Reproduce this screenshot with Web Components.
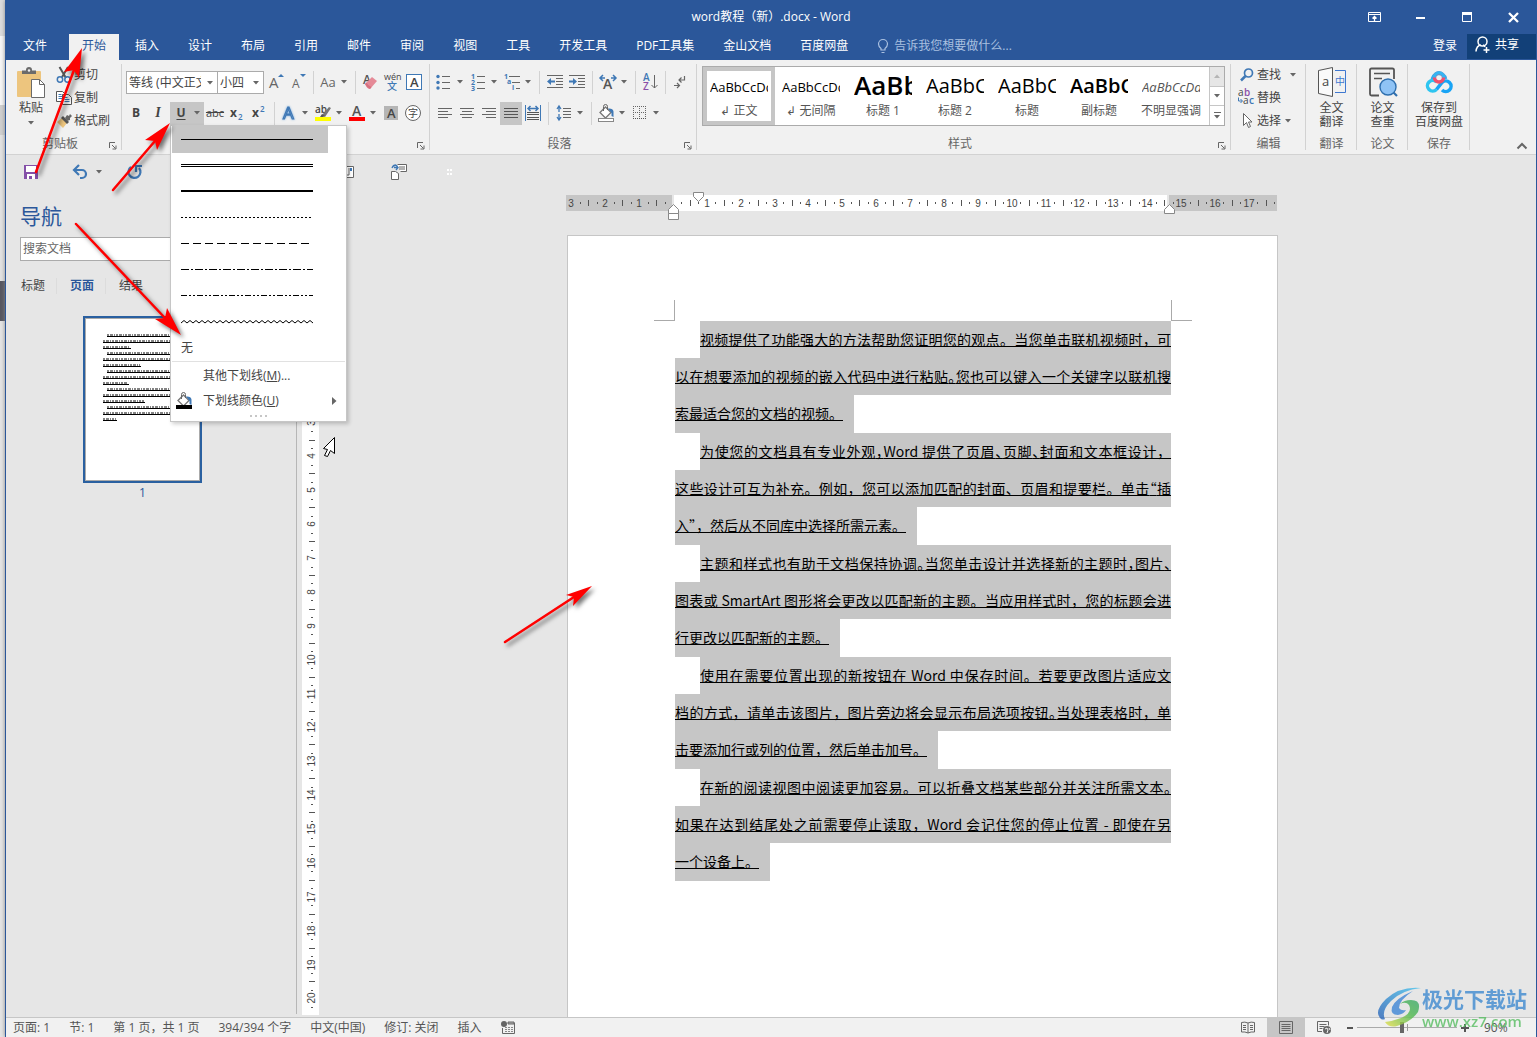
<!DOCTYPE html>
<html lang="zh-CN">
<head>
<meta charset="utf-8">
<title>word教程（新）.docx - Word</title>
<style>
html, body { margin: 0; height: 100%; }
body {
  overflow: hidden;
  font: 12px/16px "Open Sans", "Noto Sans CJK SC", sans-serif;
  color: #444;
  --blue: #2b579a; --face: #f1f1f1; --sel: #c6c6c6; --back: #e6e6e6; --accent: #3f78b5;
}
</style>
</head>
<body>
<word-window>
  <title-bar slot="title">word教程（新）.docx - Word</title-bar>
  <tab-strip slot="tabs"></tab-strip>
  <ribbon-bar slot="ribbon">
    <clipboard-group></clipboard-group>
    <font-group></font-group>
    <paragraph-group></paragraph-group>
    <style-group></style-group>
    <edit-group></edit-group>
    <plugin-group icon="translate" label="翻译" w="50">全文<br>翻译</plugin-group>
    <plugin-group icon="paper" label="论文" w="50">论文<br>查重</plugin-group>
    <plugin-group icon="cloud" label="保存" w="61">保存到<br>百度网盘</plugin-group>
  </ribbon-bar>
  <quick-bar slot="quick"></quick-bar>
  <nav-pane slot="nav"></nav-pane>
  <document-view slot="doc"></document-view>
  <status-bar slot="status"></status-bar>
</word-window>
<site-mark></site-mark>
<pointer-layer></pointer-layer>

<script>
const base = `
  :host, *, *::before, *::after { box-sizing: border-box; }
  button { font: inherit; color: inherit; background: none; border: 0; padding: 0; margin: 0; display: flex; align-items: center; justify-content: center; white-space: nowrap; }
  svg { display: block; }
`;
function define(name, css, html) {
  const tpl = document.createElement('template');
  customElements.define(name, class extends HTMLElement {
    connectedCallback() {
      if (this.shadowRoot) return;
      tpl.innerHTML = `<style>${base}${css}</style>` + (typeof html === 'function' ? html(this) : html);
      this.attachShadow({ mode: 'open' }).appendChild(tpl.content.cloneNode(true));
    }
  });
}

/* ---------- icons: [width, height, markup] ---------- */
const G = 'stroke="#666" fill="none"', B = 'stroke="#3f78b5" fill="none"';
const lines = (ys, x1, x2, c = '#666') => ys.map(y => `<path d="M${x1} ${y}.5H${x2}" stroke="${c}"/>`).join('');
const T = (x, y, size, text, color = '#555', extra = '') =>
  `<text x="${x}" y="${y}" font-size="${size}" fill="${color}" ${extra}>${text}</text>`;
const bucket = `<path d="M3 8.500 8.500 3 14 8.500 8.500 14Z" fill="#fff" stroke="#777" stroke-width="1.300"/><path d="M6.500 7V2.500q0-2 2-2t2 2V6" ${G}/><path d="M11 4.500q5-.5 5.500 3V13l-2-1V9z" fill="#3f78b5"/>`;
const icons = {
  paste: [30, 32, `<rect x="1" y="4" width="24" height="26" rx="1" fill="#edc57e"/><path d="M6 7V3.500h4V3q0-3 3-3t3 3v.5h4V7z" fill="#6b6b6b"/><circle cx="13" cy="3.500" r="1.200" fill="#f1f1f1"/><path d="M15.500 12.500h8l5 5v13h-13z" fill="#fff" stroke="#6b6b6b"/><path d="M23.500 12.500v5h5" ${G}/>`],
  cut: [16, 16, `<path d="M3.500 0 10 11M12 0 5.500 11" stroke="#555" stroke-width="2"/><circle cx="4" cy="12.500" r="2.700" stroke="#3f78b5" stroke-width="1.500" fill="none"/><circle cx="11.500" cy="12.500" r="2.700" stroke="#3f78b5" stroke-width="1.500" fill="none"/>`],
  copy: [16, 16, `<path d="M.5 1.500h6l2 2v8h-8z" fill="#fff" stroke="#555"/><path d="M2.500 4.500h3M2.500 6.500h4M2.500 8.500h4" ${B}/><path d="M6.500 4.500h6l3 3v7h-9z" fill="#fff" stroke="#555"/><path d="M8.500 7.500h3M8.500 9.500h5M8.500 11.500h5" ${B}/>`],
  brush: [16, 16, `<path d="M1 9 6 5l5 5-4 5z" fill="#edc57e"/><path d="M5 5l2-2 6 6-2 2z" fill="#555"/><path d="M9 5l2-3 2 1 1-2 2 2-2 2 0 2-3 1z" fill="#666"/>`],
  launch: [8, 8, `<path d="M.5 6V.5H6" ${G}/><path d="M3 3l3.500 3.500M7 3.500V7H3.500" stroke="#666" fill="none"/>`],
  caret: [6, 4, `<path d="M0 0H6L3 3.500Z" fill="#666"/>`],
  caretUp: [6, 4, `<path d="M0 4H6L3 .5Z" fill="#b5b5b5"/>`],
  grow: [18, 18, T(2, 15, 15, 'A', '#666') + `<path d="M11 4h6L14 1Z" fill="#3f78b5"/>`],
  shrink: [18, 18, T(3, 15, 12, 'A', '#666') + `<path d="M11 1h6l-3 3Z" fill="#3f78b5"/>`],
  erase: [18, 18, T(2, 11, 12, 'A', '#555', 'font-weight="600"') + `<path d="M4 11 11 4l5 4-7 8q-3 0-5-5z" fill="#e58a97"/><path d="M4 11q2 4 5 5l1.500-2Q7 13 5.500 9.500z" fill="#d8707f"/>`],
  pinyin: [18, 20, T(1, 8, 9, 'wén', '#444') + T(4, 18, 10, '文', '#3f78b5', 'font-weight="500"')],
  boxA: [18, 18, `<rect x="1.500" y="1.500" width="15" height="15" fill="#fff" stroke="#3f78b5"/>` + T(5, 14, 13, 'A', '#444', 'font-weight="600"')],
  sub: [16, 16, T(1, 12, 12, 'x', '#444', 'font-weight="700"') + T(9, 15, 8, '2', '#3f78b5', 'font-weight="600"')],
  sup: [16, 16, T(1, 12, 12, 'x', '#444', 'font-weight="700"') + T(9, 7, 8, '2', '#3f78b5', 'font-weight="600"')],
  effect: [16, 18, `<text x="2" y="15" font-size="17" fill="#fff" stroke="#3f78b5" stroke-width="1.200" style="filter:drop-shadow(0 0 1px #7fb0e0)">A</text>`],
  marker: [18, 18, T(1, 9, 10, 'ab', '#444', 'font-weight="600"') + `<path d="M8 11l7-8 2 1-6 9z" fill="#777"/><path d="M6 13l2-3 3 2-2 1z" fill="#555"/><path d="M1 13h16v4H1z" fill="#ff0"/>`],
  color: [18, 18, T(4, 12, 14, 'A', '#555', 'font-weight="600"') + `<path d="M1 13h16v4H1z" fill="#f00"/>`],
  shade: [16, 16, `<path d="M1 1h14v14H1z" fill="#b5b5b5"/>` + T(4, 13, 13, 'A', '#444', 'font-weight="600"')],
  circle: [18, 18, `<circle cx="9" cy="9" r="7.500" fill="#fff" stroke="#666"/>` + T(4, 13, 10, '字', '#444')],
  bullets: [16, 16, lines([2, 8, 14], 6, 14) + `<circle cx="2" cy="2.500" r="1.700" fill="#3f78b5"/><circle cx="2" cy="8.500" r="1.700" fill="#3f78b5"/><circle cx="2" cy="14" r="1.700" fill="#3f78b5"/>`],
  numbers: [16, 18, lines([3, 9, 15], 7, 15) + T(1, 6, 7, '1', '#3f78b5', 'font-weight="700"') + T(1, 12, 7, '2', '#3f78b5', 'font-weight="700"') + T(1, 18, 7, '3', '#3f78b5', 'font-weight="700"')],
  multi: [18, 18, lines([3], 6, 17) + lines([9], 9, 17) + lines([15], 13, 17) + T(1, 6, 7, '1', '#3f78b5', 'font-weight="700"') + T(4, 11, 7, 'a', '#3f78b5', 'font-weight="700"') + T(9, 17, 7, 'i', '#3f78b5', 'font-weight="700"')],
  outdent: [16, 16, lines([1, 13], 0, 16) + lines([4, 7, 10], 9, 16) + `<path d="M0 7.500 4 4v2.500h4v2H4V11z" fill="#3f78b5"/>`],
  indent: [16, 16, lines([1, 13], 0, 16) + lines([4, 7, 10], 9, 16) + `<path d="M8 7.500 4 4v2.500H0v2h4V11z" fill="#3f78b5"/>`],
  asian: [18, 16, T(4, 15, 14, 'A', '#555', 'font-weight="600"') + `<path d="M1 4h5M4 1 1 4l3 3M17 4h-5M14 1l3 3-3 3" ${B} stroke-width="1.500"/>`],
  sort: [16, 18, T(1, 8, 10, 'A', '#3f78b5', 'font-weight="600"') + T(1, 17, 10, 'Z', '#8a4fa8', 'font-weight="600"') + `<path d="M12.500 2v13M9.500 12l3 3 3-3" ${G}/>`],
  pilcrow: [14, 14, `<path d="M11.500 1v4H6M8.500 2.500 6 5l2.500 2.500" ${G} stroke-width="1.200"/><path d="M1 10.500h5M4 8l2.500 2.500L4 13" ${G} stroke-width="1.200"/>`],
  left: [14, 12, lines([1, 7], 0, 14) + lines([4, 10], 0, 10)],
  center: [14, 12, lines([1, 7], 0, 14) + lines([4, 10], 2, 12)],
  right: [14, 12, lines([1, 7], 0, 14) + lines([4, 10], 4, 14)],
  justify: [14, 12, lines([1, 4, 7, 10], 0, 14, '#555')],
  spread: [16, 16, lines([7, 9, 12, 14], 2, 14, '#555') + `<path d="M.5 0v16M15.500 0v16" ${B}/><path d="M3 3.500h10M5.500 1 3 3.500 5.500 6M10.500 1 13 3.500 10.500 6" ${B} stroke-width="1.500"/>`],
  spacing: [16, 16, lines([3, 6, 9, 12], 7, 15) + `<path d="M3 2v5M1 4l2-3 2 3M3 9v5M1 12l2 3 2-3" ${B} stroke-width="1.300"/>`],
  fill: [18, 18, bucket + `<rect x="1.500" y="14.500" width="15" height="3" fill="#fff" stroke="#888"/>`],
  border: [14, 14, `<path d="M0 .5H14M0 6.500H14M.5 0V14M6.500 0V14M12.500 0V14" stroke="#666" stroke-dasharray="1 1"/><path d="M0 12.500H13" stroke="#555" stroke-dasharray="1 1"/>`],
  find: [14, 14, `<circle cx="8.500" cy="5" r="4" stroke="#3f78b5" stroke-width="1.700" fill="none"/><path d="M5.500 8 1 12.500" stroke="#3f78b5" stroke-width="2.500"/>`],
  replace: [18, 18, T(0, 7, 10, 'a', '#444') + T(6, 7, 10, 'b', '#8a4fa8', 'font-weight="600"') + T(5, 15, 10, 'a', '#444') + T(11, 15, 10, 'c', '#3f78b5', 'font-weight="600"') + `<path d="M.5 8.500V12H4M2.500 10l2 2-2 2" ${B}/>`],
  select: [12, 16, `<path d="M2.500.5v12l3-3 2 5 2-1-2-4.500h3.500z" fill="#fff" stroke="#666"/>`],
  translate: [30, 30, `<path d="M1.500 3.500 15.500.5v29l-14-3z" fill="#fafafa" stroke="#555"/><path d="M18 3.500h10.500v22H18" stroke="#3f78d0" fill="none"/>` + T(5, 19, 13, 'a', '#444') + T(18, 18, 10, '中', '#3f78d0')],
  paper: [30, 30, `<path d="M26 12V3q0-1.500-1.500-1.500h-21Q2 1.500 2 3v24q0 1.500 1.500 1.500H11" stroke="#555" stroke-width="1.800" fill="none"/><path d="M6 6.500h16M6 11.500h8" stroke="#555" stroke-width="1.500"/><path d="M25 25l4 4" stroke="#2f6fae" stroke-width="2.200"/><circle cx="20" cy="20" r="8" fill="#8fc3f5" stroke="#2f6fae" stroke-width="1.400"/>`],
  cloud: [28, 30, `<g fill="none" stroke-width="3.500"><path d="M7.500 14a6.500 6.500 0 0 1 13 -2" stroke="#2eaaf0"/><path d="M11.500 22.500a5.300 5.300 0 1 1 0-7.500" stroke="#2ec5f0"/><path d="M11.500 22.500 17 15.500a5.300 5.300 0 1 1 0 7.500" stroke="#19a4f5"/><circle cx="14" cy="10.500" r="4.500" stroke="#f0506e"/><path d="M9.300 10.500a4.700 4.700 0 0 1 9.400 0" stroke="#35b5f2"/></g>`],
  up: [12, 8, `<path d="M1.500 6.500 6 2l4.500 4.500" stroke="#666" stroke-width="2" fill="none"/>`],
  save: [14, 14, `<path d="M0 0h14v14H0z" fill="#8450a8"/><path d="M2 1h10v6H2z" fill="#fff"/><path d="M3 9h8v5H3z" fill="#fff"/><path d="M5 11h3v3H5z" fill="#8450a8"/>`],
  undo: [16, 14, `<path d="M2 5h7a4 4 0 0 1 0 8H7" stroke="#3f78b5" stroke-width="2.200" fill="none"/><path d="M6 0 1 5l5 5" stroke="#3f78b5" stroke-width="2.200" fill="none"/>`],
  redo: [16, 16, `<path d="M4 3A6 6 0 1 0 12 4" stroke="#3f78b5" stroke-width="2.200" fill="none"/><path d="M9 8V2h6" stroke="#3f78b5" stroke-width="2.200" fill="none"/>`],
  touch: [16, 16, `<path d="M6.500 2.500h8v11h-8z" fill="#fff" stroke="#666"/><path d="M10 4v7H7" ${G}/><path d="M11 4h2v3h-2z" fill="#3f78b5"/>`],
  toPage: [18, 18, `<path d="M7.500 1.500h9v7h-6" fill="#fff" stroke="#666"/><path d="M9 4h6M9 6h6" ${G}/><path d="M1.500 8.500h4l3 2v6h-7z" fill="#fff" stroke="#666"/><path d="M2 5q1-3 4-3M4 4.500h4M6 2l2 2.500L6 7" ${B} stroke-width="1.300"/>`],
  ribbon: [14, 11, `<path d="M.5.5h12v9H.5zM.5 2.500h12" stroke="#fff" fill="none"/><path d="M6.500 9V5M4.500 6.500l2-2 2 2" stroke="#fff" fill="none" stroke-width="1.300"/>`],
  min: [10, 3, `<path d="M0 1h9v2H0z" fill="#fff"/>`],
  max: [10, 10, `<path d="M.5.5h9v9h-9z" stroke="#fff" fill="none"/><path d="M0 0h10v3H0z" fill="#fff"/>`],
  close: [11, 11, `<path d="M1 1l9 9M10 1l-9 9" stroke="#fff" stroke-width="2.300"/>`],
  bulb: [12, 15, `<path d="M4 11V9.500Q1.500 7.500 1.500 5a4.500 4.500 0 0 1 9 0Q10.500 7.500 8 9.500V11zM4.500 13.500h3" stroke="#a9c0e0" fill="none" stroke-width="1.200"/>`],
  person: [16, 17, `<circle cx="7.500" cy="5.500" r="4.500" stroke="#fff" stroke-width="1.500" fill="none"/><path d="M1 15.500q.5-6 5-6.500M8 9q1.500.5 2 2M11.500 11v6M8.500 14h6" stroke="#fff" stroke-width="1.500" fill="none"/>`],
  macro: [14, 13, `<path d="M7 2h6.500v10.500h-12V7M7 1h6v2H7z" stroke="#666" fill="none"/><circle cx="3" cy="3" r="3" fill="#666"/><path d="M4 6.500h2M7 6.500h2M10 6.500h2M4 8.500h2M7 8.500h2M10 8.500h2M4 10.500h2M7 10.500h2M10 10.500h2" stroke="#888"/>`],
  read: [14, 13, `<path d="M.5 1.500Q4 .5 7 2q3-1.500 6.500-.5v9.500q-3.500-.5-6.500 1-3-1.500-6.500-1zM7 2v10M2 4.500h3M2 6.500h3M2 8.500h3M9 4.500h3M9 6.500h3M9 8.500h3" ${G}/>`],
  print: [14, 13, `<path d="M.5.5h13v12H.5zM2.500 3.500h9M2.500 5.500h9M2.500 7.500h9M2.500 9.500h9" ${G}/>`],
  web: [15, 14, `<path d="M5 10.500H.5V.5h11v4M2.500 3.500h7M2.500 5.500h5M2.500 7.500h3" ${G}/><circle cx="10" cy="9" r="4" fill="#666"/><path d="M8 8l2-1 1 2-1 3M12 7l1 2" stroke="#f1f1f1" fill="none"/>`],
  swatch: [18, 18, bucket + `<path d="M1 13h16v4H1z" fill="#000"/>`],
  next: [5, 8, `<path d="M0 0v8l4.500-4z" fill="#666"/>`]
};
define('w-icon', ':host{display:block;flex:none;line-height:1} svg{overflow:visible}', el => {
  const [w, h, m] = icons[el.getAttribute('n')];
  return `<svg width="${w}" height="${h}" viewBox="0 0 ${w} ${h}" aria-hidden="true">${m}</svg>`;
});
const ic = n => `<w-icon n="${n}"></w-icon>`;

/* ---------- window frame ---------- */
define('word-window', `
  :host { display: flex; height: 100vh; background: linear-gradient(#dcdcdc 0 36px, #f6f6f6 36px 105px, #cfcfcf 105px 135px, #e2e2e2 135px 281px, #565660 281px 321px, #e4e4e4 321px); }
  .win { flex: 1; min-width: 0; margin-left: 5px; border: solid var(--blue); border-width: 0 1px; display: flex; flex-direction: column; background: var(--back); box-shadow: 0 0 4px #888; }
  .body { flex: 1; min-height: 0; display: flex; }
  slot[name=doc]::slotted(*) { flex: 1; min-width: 0; }
`, `<div class="win"><slot name="title"></slot><slot name="tabs"></slot><slot name="ribbon"></slot><slot name="quick"></slot>
  <div class="body"><slot name="nav"></slot><slot name="doc"></slot></div><slot name="status"></slot></div>`);

define('title-bar', `
  :host { display: flex; height: 34px; background: var(--blue); color: #fff; align-items: center; }
  .side { flex: 1; display: flex; justify-content: flex-end; }
  button { width: 46px; height: 32px; }
`, `<div class="side"></div><slot></slot><div class="side">
  <button aria-label="功能区显示选项">${ic('ribbon')}</button><button aria-label="最小化">${ic('min')}</button><button aria-label="最大化">${ic('max')}</button><button aria-label="关闭">${ic('close')}</button></div>`);

define('tab-strip', `
  :host { display: flex; height: 26px; background: var(--blue); color: #fff; padding-left: 4px; gap: 3px; }
  button { padding: 0 13px 2px; height: 26px; }
  .file { margin-right: 6px; }
  .on { background: var(--face); color: var(--blue); }
  .tell { color: #a9c0e0; gap: 5px; }
  .push { margin-left: auto; padding: 0 8px 2px; }
  .share { background: #124078; padding: 0 17px 4px 8px; height: 25px; gap: 4px; margin-left: -1px; }
`, `<button class="file">文件</button>` +
  ['开始', '插入', '设计', '布局', '引用', '邮件', '审阅', '视图', '工具', '开发工具', 'PDF工具集', '金山文档', '百度网盘']
    .map((t, i) => `<button class="${i ? '' : 'on'}">${t}</button>`).join('') +
  `<button class="tell">${ic('bulb')}告诉我您想要做什么...</button><button class="push">登录</button><button class="share">${ic('person')}共享</button>`);

/* ---------- ribbon ---------- */
define('ribbon-bar', `
  :host { display: flex; height: 95px; background: var(--face); border-bottom: 1px solid #d2d2d2; position: relative; z-index: 2; }
  ::slotted(style-group) { flex: 1; min-width: 0; }
  .end { width: 66px; display: flex; align-items: flex-end; justify-content: flex-end; padding: 0 8px 4px 0; }
`, `<slot></slot><div class="end"><button aria-label="折叠功能区">${ic('up')}</button></div>`);

define('ribbon-group', `
  :host { display: flex; flex-direction: column; height: 94px; width: var(--gw, auto); position: relative; }
  :host::after { content: ""; position: absolute; right: 0; top: 4px; bottom: 4px; width: 1px; background: #d2d2d2; }
  .main { flex: 1; min-height: 0; }
  footer { display: flex; height: 16px; margin-bottom: 2px; padding: 0 5px; color: #666; }
  .name { flex: 1; text-align: center; }
  .l { height: 14px; width: 8px; align-items: flex-end; }
`, el => `<div class="main"><slot></slot></div><footer><span class="name">${el.getAttribute('label')}</span>${el.hasAttribute('launch') ? `<button class="l" aria-label="${el.getAttribute('label')}设置">${ic('launch')}</button>` : ''}</footer>`);

const tools = `
  :host { display: block; flex: none; }
  .rows { display: flex; flex-direction: column; gap: 8px; padding-top: 11px; }
  .row { display: flex; height: 23px; }
  .t { width: 22px; flex: none; padding-bottom: 1px; }
  .d { width: 34px; flex: none; justify-content: flex-start; padding-bottom: 1px; }
  .d > :first-child { width: 22px; display: flex; justify-content: center; }
  .d > :last-child { margin-left: 2px; }
  .sep { width: 8px; flex: none; display: flex; justify-content: center; }
  .sep::before { content: ""; width: 1px; background: #d2d2d2; }
  .wide { width: 9px; }
  .on { background: var(--sel); }
`;
const t = (n, label, cls = '') => `<button class="t ${cls}" aria-label="${label}">${ic(n)}</button>`;
const d = (n, label) => `<button class="d" aria-label="${label}"><span>${ic(n)}</span>${ic('caret')}</button>`;
const sep = '<span class="sep"></span>', sepW = '<span class="sep wide"></span>';

define('clipboard-group', `
  :host { display: block; --gw: 116px; }
  .c { display: flex; padding: 3px 0 0 12px; }
  .paste { flex-direction: column; width: 26px; justify-content: flex-start; align-items: center; padding-top: 4px; }
  .paste span { line-height: 16px; margin: 1px 0 5px; }
  .small { display: flex; flex-direction: column; margin: 0 0 0 12px; }
  .small button { height: 23px; justify-content: flex-start; gap: 2px; }
`, `<ribbon-group label="剪贴板" launch><div class="c">
  <button class="paste">${ic('paste')}<span>粘贴</span>${ic('caret')}</button>
  <div class="small"><button>${ic('cut')}剪切</button><button>${ic('copy')}复制</button><button>${ic('brush')}格式刷</button></div></div></ribbon-group>`);

define('font-group', tools + `
  :host { --gw: 308px; }
  .row { padding-left: 3px; }
  .row.top { padding-left: 4px; }
  .combo { display: flex; background: #fff; border: 1px solid #ababab; align-items: center; margin-right: 1px; position: relative; }
  .combo:first-child { margin: 0; width: 92px; border-right-width: 1px; }
  .combo:nth-child(2) { width: 46px; border-left: 0; }
  select { appearance: none; border: 0; background: none; font: inherit; color: inherit; flex: 1; min-width: 0; height: 21px; padding: 0 0 0 2px; margin-right: 16px; overflow: hidden; }
  .combo w-icon { position: absolute; right: 4px; pointer-events: none; }
  .b { font-weight: 700; }
  .i { font: italic 600 14px "Liberation Serif", serif; }
  .u { font-weight: 700; text-decoration: underline; text-underline-offset: 2px; }
  .s { text-decoration: line-through; font-size: 11px; }
  .case { font-size: 13px; color: #666; }
  .anchor { position: relative; margin-left: 1px; }
  .anchor .d { height: 23px; }
  underline-menu { position: absolute; left: 0; top: 23px; z-index: 3; }
`, `<ribbon-group label="" launch><div class="rows">
  <div class="row top"><div class="combo"><select aria-label="字体"><option>等线 (中文正文)</option></select>${ic('caret')}</div>
   <div class="combo"><select aria-label="字号"><option>小四</option></select>${ic('caret')}</div>
   ${t('grow', '增大字号')}${t('shrink', '减小字号')}${sep}<button class="d" aria-label="更改大小写"><span class="case">Aa</span>${ic('caret')}</button>${sep}
   ${t('erase', '清除格式')}${t('pinyin', '拼音指南')}${t('boxA', '字符边框')}</div>
  <div class="row"><button class="t b">B</button><button class="t i">I</button>
   <div class="anchor"><button class="d on" aria-label="下划线"><span class="u">U</span>${ic('caret')}</button><underline-menu></underline-menu></div>
   <button class="t s">abc</button>${t('sub', '下标')}${t('sup', '上标')}${sep}${d('effect', '文本效果')}${d('marker', '突出显示')}${d('color', '字体颜色')}${t('shade', '字符底纹')}${t('circle', '带圈字符')}</div>
  </div></ribbon-group>`);

const rule = m => `<svg width="132" height="6" viewBox="0 0 132 6"><g stroke="#000" fill="none">${m}</g></svg>`;
const wave = 'M0 4' + Array.from({ length: 22 }, () => 'l3-2.500 3 2.500').join('');
define('underline-menu', `
  :host { display: block; width: 177px; background: #fff; border: 1px solid #c6c6c6; box-shadow: 2px 2px 4px #0003; }
  ul { list-style: none; margin: 0; padding: 0 1px; }
  .line { width: 156px; height: 26px; justify-content: flex-start; padding-left: 9px; }
  .line.on { background: var(--sel); height: 27px; }
  .none { height: 26px; width: 100%; justify-content: flex-start; padding-left: 9px; }
  hr { border: 0; border-top: 1px solid #e1e1e1; margin: 0 1px 1px; }
  .cmd { width: 100%; height: 25px; justify-content: flex-start; }
  .cmd .ico { width: 32px; padding-left: 4px; }
  .cmd .more { margin-left: auto; padding-right: 9px; }
  .grip { height: 8px; padding-top: 2px; display: flex; gap: 3px; justify-content: center; }
  .grip i { width: 2px; height: 2px; background: #c6c6c6; }
`, () => `<ul>` + [
    '<path d="M0 2.500H132"/>', '<path d="M0 1.500H132M0 3.500H132"/>', '<path d="M0 2H132" stroke-width="2"/>',
    '<path d="M0 2.500H130" stroke-dasharray="2 2"/>', '<path d="M0 2.500H128" stroke-dasharray="8 4"/>',
    '<path d="M0 2.500H132" stroke-dasharray="8 2 2 2"/>', '<path d="M0 2.500H132" stroke-dasharray="6 2 2 2 2 2"/>', `<path d="${wave}"/>`
  ].map((m, i) => `<li><button class="line ${i ? '' : 'on'}" aria-label="线型 ${i + 1}">${rule(m)}</button></li>`).join('') +
  `<li><button class="none">无</button></li></ul><hr>
  <button class="cmd"><span class="ico"></span>其他下划线(<u>M</u>)...</button>
  <button class="cmd"><span class="ico">${ic('swatch')}</span>下划线颜色(<u>U</u>)<span class="more">${ic('next')}</span></button>
  <div class="grip"><i></i><i></i><i></i><i></i></div>`);

define('paragraph-group', tools + `
  :host { --gw: 267px; }
  .row { padding-left: 3px; } .row + .row { padding-left: 4px; }
`, `<ribbon-group label="段落" launch><div class="rows">
  <div class="row">${d('bullets', '项目符号')}${d('numbers', '编号')}${d('multi', '多级列表')}${sepW}${t('outdent', '减少缩进量')}${t('indent', '增加缩进量')}${sepW}${d('asian', '中文版式')}${sep}${t('sort', '排序')}${sep}${t('pilcrow', '显示编辑标记')}</div>
  <div class="row">${t('left', '左对齐')}${t('center', '居中')}${t('right', '右对齐')}${t('justify', '两端对齐', 'on')}${t('spread', '分散对齐')}${sepW}${d('spacing', '行距')}${sep}${d('fill', '底纹')}${d('border', '边框')}</div>
  </div></ribbon-group>`);

define('style-card', `
  :host { display: block; width: 72px; flex: none; }
  button { width: 72px; height: 58px; flex-direction: column; border: 4px solid transparent; justify-content: flex-start; padding: 0 3px; }
  :host([on]) button { border-color: var(--sel); }
  .demo { width: 58px; height: 30px; overflow: hidden; font-size: 13px; line-height: 32px; text-align: left; color: #000; }
  :host([look=h1]) .demo { font-size: 26px; font-weight: 600; line-height: 28px; }
  :host([look=h2]) .demo, :host([look=sub]) .demo { font-size: 20px; line-height: 30px; }
  :host([look=sub]) .demo { font-weight: 600; }
  :host([look=em]) .demo { font-style: italic; color: #555; }
  .name { line-height: 16px; color: #555; margin-top: 2px; }
`, el => `<button><div class="demo">${el.getAttribute('demo')}</div><div class="name"><slot></slot></div></button>`);

define('style-group', `
  :host { display: block; --gw: 100%; }
  .g { margin: 6px 6px 0 5px; height: 60px; border: 1px solid #ababab; background: #fff; display: flex; overflow: hidden; }
  .cards { flex: 1; min-width: 0; display: flex; overflow: hidden; }
  .sc { width: 15px; display: flex; flex-direction: column; border-left: 1px solid #c6c6c6; }
  .sc button { flex: 1; border-top: 1px solid #c6c6c6; flex-direction: column; gap: 2px; }
  .sc button:first-child { border: 0; background: #e6e6e6; }
  .sc i { width: 7px; height: 1px; background: #666; }
`, `<ribbon-group label="样式" launch><div class="g"><div class="cards">
  <style-card demo="AaBbCcDd" on>↲ 正文</style-card><style-card demo="AaBbCcDd">↲ 无间隔</style-card><style-card look="h1" demo="AaBb">标题 1</style-card><style-card look="h2" demo="AaBbC">标题 2</style-card><style-card look="h2" demo="AaBbC">标题</style-card><style-card look="sub" demo="AaBbC">副标题</style-card><style-card look="em" demo="AaBbCcDd">不明显强调</style-card></div>
  <div class="sc"><button aria-label="上一行">${ic('caretUp')}</button><button aria-label="下一行">${ic('caret')}</button><button aria-label="其他"><i></i>${ic('caret')}</button></div></div></ribbon-group>`);

define('edit-group', `
  :host { display: block; flex: none; --gw: 75px; }
  .c { padding: 3px 0 0 6px; }
  button { height: 23px; }
  button span { width: 20px; display: flex; justify-content: center; }
  button > :last-child:not(span) { margin-left: 4px; }
  .f > :last-child:not(span) { margin-left: 9px; }
`, `<ribbon-group label="编辑"><div class="c"><button class="f"><span>${ic('find')}</span>查找${ic('caret')}</button><button><span>${ic('replace')}</span>替换</button><button><span>${ic('select')}</span>选择${ic('caret')}</button></div></ribbon-group>`);

define('plugin-group', `
  :host { display: block; flex: none; }
  button { flex-direction: column; width: 100%; line-height: 14px; padding-top: 7px; gap: 4px; }
`, el => `<style>:host{--gw:${+el.getAttribute('w') + 1}px}</style><ribbon-group label="${el.getAttribute('label')}"><button>${ic(el.getAttribute('icon'))}<span><slot></slot></span></button></ribbon-group>`);

/* ---------- below the ribbon ---------- */
define('quick-bar', `
  :host { display: flex; height: 32px; padding: 2px 0 0 15px; }
  button { width: 20px; height: 30px; }
  .save { margin-right: 30px; }
  .list { width: 16px; }
  .redo { margin: 0 192px 0 18px; }
  .more { margin-left: 32px; }
  .dots { width: 3px; height: 6px; border: dotted #fff; border-width: 2px 0; margin: 12px 0 0 38px; }
`, `<button class="save" aria-label="保存">${ic('save')}</button><button aria-label="撤消">${ic('undo')}</button><button class="list" aria-label="撤消列表">${ic('caret')}</button><button class="redo" aria-label="恢复">${ic('redo')}</button><button aria-label="触摸模式">${ic('touch')}</button><button class="more" aria-label="插入页">${ic('toPage')}</button><span class="dots"></span>`);

const thumbRows = [[1, 0], [0, 0], [0, 28], [1, 0], [0, 0], [0, 38], [1, 0], [0, 0], [0, 26], [1, 0], [0, 0], [0, 42], [1, 0], [0, 0], [0, 14]];
define('nav-pane', `
  :host { display: flex; flex: none; flex-direction: column; width: 291px; border-right: 1px solid #b6b6b6; padding: 15px 14px 0; margin-bottom: 3px; }
  h2 { margin: 0 0 7px; font-size: 21px; line-height: 28px; font-weight: 400; color: var(--blue); }
  input { font: inherit; height: 24px; border: 1px solid #ababab; padding: 0 2px 1px; width: 100%; background: #fff; }
  input::placeholder { color: #666; }
  nav { display: flex; margin: 17px 0 22px; padding-left: 1px; }
  nav button { height: 16px; padding-right: 11px; margin-right: 13px; border-right: 1px solid #dcdcdc; }
  nav button:last-child { border: 0; }
  .on { color: var(--blue); font-weight: 700; }
  figure { margin: 0 0 0 63px; width: 119px; }
  figure div { height: 167px; background: #fff; border: 2px solid #2a60a0; outline: 1px solid #aaa; outline-offset: -3px; }
  figcaption { text-align: center; line-height: 20px; color: var(--blue); }
`, () => `<h2>导航</h2><input type="search" aria-label="搜索文档" placeholder="搜索文档">
  <nav><button>标题</button><button class="on">页面</button><button>结果</button></nav>
  <figure><div><svg width="115" height="163" viewBox="0 0 115 163">${thumbRows.map(([ind, w], i) => {
    const x = ind ? 22 : 18, x2 = w ? 18 + w : 98, y = 18 + i * 6;
    return `<path d="M${x} ${y - 1}H${x2 - 1}" stroke="#333" stroke-width="2" stroke-dasharray="2 1 3 1 1 1" opacity=".6"/><path d="M${x} ${y}.500H${x2}" stroke="#000"/>`;
  }).join('')}</svg></div><figcaption>1</figcaption></figure>`);

function ticks(from, to, origin, vertical) {
  let text = '', marks = '';
  const pitch = 33.87;
  for (let q = from * 4; q <= to * 4; q++) {
    if (q === 0) continue;
    const p = Math.round(origin + q * pitch / 4);
    if (q % 4 === 0) {
      const n = Math.abs(q / 4);
      text += vertical ? `<text transform="translate(13 ${p}) rotate(-90)">${n}</text>` : `<text x="${p}" y="17">${n}</text>`;
    } else {
      const half = q % 2 === 0, a = half ? 0 : 2, b = half ? 6 : 2;
      marks += vertical ? `<path d="M${half ? 7 : 9} ${p}.500h${b}"/>` : `<path d="M${p}.500 ${10 + a}v${b}"/>`;
    }
  }
  return `<g stroke="#555" fill="none">${marks}</g><g font-family="Liberation Sans, sans-serif" font-size="10" fill="#444" text-anchor="middle">${text}</g>`;
}
define('h-ruler', ':host{display:block;width:711px;flex:none} svg{overflow:visible}', () =>
  `<svg width="711" height="32" viewBox="0 0 711 32"><path d="M-1 5H105V21H-1zM602 5H710V21H602z" fill="#c6c6c6"/><path d="M107 5H600V21H107z" fill="#fff"/>${ticks(-3, 17.75, 106, false)}
  <g fill="#fff" stroke="#888"><path d="M126.500 2.500h10v4l-5 5-5-5z"/><path d="M101.500 23.500v-4l5-5 5 5v4zM101.500 23.500h10v6h-10z"/><path d="M597.500 23.500v-4l5-5 5 5v4z"/></g></svg>`);
define('v-ruler', ':host{display:block;width:17px;flex:none;margin:48px 0 2px 5px;background:#fff;overflow:hidden}', () =>
  `<svg width="17" height="900" viewBox="0 0 17 900"><path d="M0 0h17v85H0z" fill="#c6c6c6"/>${ticks(-2, 22, 86, true)}</svg>`);

define('text-paragraph', `
  :host { display: block; }
  ::slotted(span) { display: block; height: 37px; line-height: 37px; background: var(--sel); white-space: nowrap; text-align: justify; text-align-last: justify; text-decoration: underline; text-decoration-thickness: 1px; text-underline-offset: 1px; text-decoration-skip-ink: none; }
  ::slotted(span:first-child) { margin-left: 25px; }
  ::slotted(span:last-child) { height: 38px; width: fit-content; padding-right: 11px; text-align-last: left; }
`, '<slot></slot>');

const paras = [
  ['视频提供了功能强大的方法帮助您证明您的观点。当您单击联机视频时，可', '以在想要添加的视频的嵌入代码中进行粘贴~。您也可以键入一个关键字以联机搜', '索最适合您的文档的视频。'],
  ['为使您的文档具有专业外观~，Word 提供了页眉~、页脚~、封面和文本框设计，', '这些设计可互为补充。例如，您可以添加匹配的封面、页眉和提要栏。单击~“插', '入”，然后从不同库中选择所需元素。'],
  ['主题和样式也有助于文档保持协调~。当您单击设计并选择新的主题时~，图片~、', '图表或 SmartArt 图形将会更改以匹配新的主题。当应用样式时，您的标题会进', '行更改以匹配新的主题。'],
  ['使用在需要位置出现的新按钮在 Word 中保存时间。若要更改图片适应文', '档的方式，请单击该图片，图片旁边将会显示布局选项按钮~。当处理表格时，单', '击要添加行或列的位置，然后单击加号。'],
  ['在新的阅读视图中阅读更加容易。可以折叠文档某些部分并关注所需文本~。', '如果在达到结尾处之前需要停止读取，Word 会记住您的停止位置 - 即使在另', '一个设备上。']
];
define('document-view', `
  :host { display: flex; overflow: hidden; }
  .col { flex: 1; min-width: 0; display: flex; flex-direction: column; align-items: center; padding: 3px 10px 0 0; overflow: hidden; }
  article { flex: 1 0 auto; width: 711px; margin-top: 13px; background: #fff; border: 1px solid #c6c6c6; border-bottom: 0; padding-top: 64px; height: 900px; }
  .marks { display: flex; justify-content: space-between; padding: 0 85px 0 86px; }
  .marks i { width: 21px; height: 21px; border: solid #aaa; border-width: 0 1px 1px 0; }
  .marks i + i { border-width: 0 0 1px 1px; }
  .text { margin: 0 106px 0 107px; color: #000; font-family: "Noto Sans CJK SC", sans-serif; font-size: 14px; }
  .half { font-weight: 400; font-feature-settings: "halt"; }
`, () => `<v-ruler></v-ruler><div class="col"><h-ruler></h-ruler><article><div class="marks"><i></i><i></i></div><div class="text">` +
  paras.map(p => `<text-paragraph>${p.map(l => `<span>${l.replace(/~(.)/g, '<b class="half">$1</b>')}</span>`).join('')}</text-paragraph>`).join('') +
  `</div></article></div>`);

define('status-bar', `
  :host { display: flex; height: 20px; background: var(--face); border-top: 1px solid #c6c6c6; align-items: center; padding-left: 7px; gap: 19px; color: #555; }
  .r { margin-left: auto; display: flex; align-items: center; height: 19px; }
  .v { width: 38px; height: 19px; }
  .on { background: var(--sel); }
  .z { width: 14px; height: 19px; }
  input { appearance: none; width: 100px; height: 14px; margin: 0 1px 0 0; background: linear-gradient(#999, #999) 50px 3px / 1px 7px no-repeat, linear-gradient(#aaa, #aaa) 0 6px / 100% 1px no-repeat; }
  input::-webkit-slider-thumb { appearance: none; width: 4px; height: 11px; background: #666; }
  output { width: 27px; margin: 0 25px 0 12px; }
`, `<span>页面: 1</span><span>节: 1</span><span>第 1 页，共 1 页</span><span>394/394 个字</span><span>中文(中国)</span><span>修订: 关闭</span><span>插入</span><button aria-label="宏录制">${ic('macro')}</button>
  <div class="r"><button class="v" aria-label="阅读视图">${ic('read')}</button><button class="v on" aria-label="页面视图">${ic('print')}</button><button class="v" aria-label="Web 版式">${ic('web')}</button>
  <button class="z" aria-label="缩小"><svg width="6" height="2"><path d="M0 0h6v2H0z" fill="#555"/></svg></button><input type="range" aria-label="缩放" min="0" max="100" value="45"><button class="z" aria-label="放大"><svg width="8" height="8"><path d="M3 0h2v3h3v2H5v3H3V5H0V3h3z" fill="#555"/></svg></button><output>90%</output></div>`);

/* ---------- overlays ---------- */
define('site-mark', `
  :host { position: absolute; right: 10px; bottom: 7px; display: flex; align-items: center; gap: 1px; z-index: 5; opacity: .8; pointer-events: none; }
  b { display: block; font-size: 21px; line-height: 25px; color: #3f8ad0; font-weight: 700; }
  span { display: block; font-size: 15px; line-height: 18px; color: #58bd62; font-weight: 600; }
  svg { overflow: visible; }
`, `<svg width="43" height="42" viewBox="0 0 43 42"><defs><linearGradient id="a" x1="0" y1="1" x2="1" y2="0"><stop offset="0" stop-color="#2a63b8"/><stop offset="1" stop-color="#45c3ee"/></linearGradient><linearGradient id="b" x1="0" y1="1" x2="1" y2="0"><stop offset="0" stop-color="#e8e04a"/><stop offset=".6" stop-color="#4fb84f"/><stop offset="1" stop-color="#3aa86a"/></linearGradient></defs>
  <path d="M43 0Q22-2 8 11-5 24 3 31q2 1 4 0-4-8 6-18Q24 2 43 0z" fill="url(#a)"/><path d="M35 3Q18 10 14 19q-2 8 6 8 6-1 8-5-5 1-7-2Q21 12 35 3z" fill="#3f86d6"/><path d="M22 16q6-3 9 1 4 8-8 13-8 3-16 4 4 6 12 4 14-4 21-14 4-12-7-12-7 0-11 4z" fill="url(#b)"/></svg><div><b>极光下载站</b><span>www.xz7.com</span></div>`);

const arrow = (x1, y1, x2, y2, len = 27, half = 7) => {
  const L = Math.hypot(x2 - x1, y2 - y1), ux = (x2 - x1) / L, uy = (y2 - y1) / L;
  const pt = (back, side) => `${Math.round(x2 - ux * back - uy * side)} ${Math.round(y2 - uy * back + ux * side)}`;
  return `<path d="M${x1} ${y1}L${pt(len - 6, 0)}" stroke="#f00" stroke-width="2.500" stroke-linecap="round"/><path d="M${x2} ${y2}L${pt(len, half)} ${pt(len - 6, 0)} ${pt(len, -half)}Z" fill="#f00"/>`;
};
define('pointer-layer', `
  :host { position: absolute; inset: 0; z-index: 6; pointer-events: none; overflow: hidden; }
  .s { filter: drop-shadow(3px 3px 2px #0008); }
`, () => `<svg width="100%" height="100%"><g class="s">${arrow(36, 172, 82, 48, 29, 8)}${arrow(113, 190, 170, 123, 29, 8)}${arrow(76, 224, 181, 335, 29, 8)}${arrow(505, 642, 592, 586)}</g>
  <path d="M334.500 437.500v16l-4-3-3 6-3-1 3-6-4-1z" fill="#fff" stroke="#000"/></svg>`);
</script>
</body>
</html>
